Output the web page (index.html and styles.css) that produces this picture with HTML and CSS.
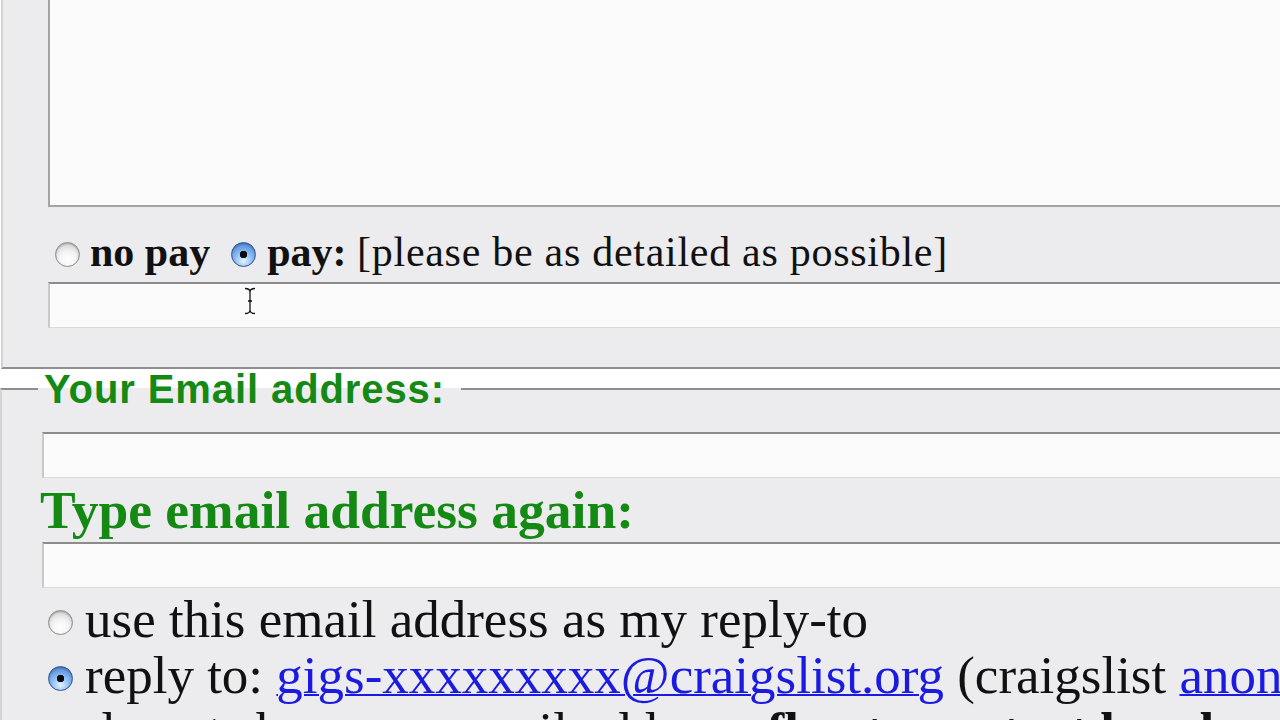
FILE: index.html
```html
<!DOCTYPE html>
<html lang="en">
<head>
  <meta charset="UTF-8" />
  <meta name="viewport" content="width=device-width, initial-scale=1.0"/>
  <title>craigslist | create posting</title>
  <link rel="stylesheet" href="styles.css">
</head>
<body>
  <div class="page">
    <form action="/post" method="POST">
      <fieldset class="box box-desc">
        <textarea class="desc" name="PostingBody"></textarea>

        <div class="pay-row">
          <input type="radio" name="pay" class="radio radio-first" value="no">
          <b class="pay-label">no pay</b>
          <input type="radio" name="pay" class="radio radio-second" value="yes" checked>
          <span class="pay-label"><b>pay:</b> <span class="hint">[please be as detailed as possible]</span></span>
        </div>

        <div class="field-wrap">
          <input type="text" class="field" name="remuneration">
          <svg class="ibeam" width="14" height="28" viewBox="0 0 14 28">
            <path d="M2 1.5 Q7 1.5 7 5 Q7 1.5 12 1.5 M7 5 V23 M2 26.5 Q7 26.5 7 23 Q7 26.5 12 26.5 M5 14 H9" fill="none" stroke="#fff" stroke-width="3"/>
            <path d="M2 1.5 Q7 1.5 7 5 Q7 1.5 12 1.5 M7 5 V23 M2 26.5 Q7 26.5 7 23 Q7 26.5 12 26.5 M5 14 H9" fill="none" stroke="#111" stroke-width="1.3"/>
          </svg>
        </div>
      </fieldset>

      <fieldset class="box box-email">
        <legend>Your Email address:</legend>
        <input type="text" class="field" name="FromEMail">

        <div class="again">Type email address again:</div>
        <input type="text" class="field" name="ConfirmEMail">

        <label class="option">
          <input type="radio" name="Privacy" class="radio radio-small" value="C">
          <span>use this email address as my reply-to</span>
        </label>
        <label class="option">
          <input type="radio" name="Privacy" class="radio radio-small" value="A" checked>
          <span>reply to: <a href="#">gigs-xxxxxxxxx@craigslist.org</a> (craigslist <a href="#">anonymizes</a> your email address)</span>
        </label>
        <div class="option-more">do not show any email address, <b>flag to contact by phone only</b></div>
      </fieldset>
    </form>
  </div>
</body>
</html>
```

FILE: styles.css
```css
html, body {
  overflow: hidden;
}
body {
  margin: 0;
  background: #fff;
  font-family: "Liberation Serif", "Times New Roman", serif;
  color: #111;
}
.page {
  margin-top: -60px;
}
.box {
  width: 1400px;
  box-sizing: border-box;
  margin: 0 0 0 1px;
  min-inline-size: 0;
  background: #ececee;
  border: 2px solid #8f8f8f;
  border-left-color: #d4d4d4;
}
.box-desc {
  padding: 18px 0 39px 45px;
}
.box-email {
  margin-left: 0;
  padding: 23px 0 0 40px;
}
.desc {
  display: block;
  width: 1340px;
  height: 247px;
  box-sizing: border-box;
  margin: 0;
  background: #fbfbfc;
  border: 2px solid #a4a4a4;
  border-top-color: #8a8a8a;
  resize: none;
}
.pay-row {
  display: flex;
  align-items: center;
  height: 50px;
  margin-top: 20px;
  font-size: 42px;
  line-height: 50px;
  white-space: nowrap;
}
.hint {
  letter-spacing: 0.72px;
}
.radio {
  -webkit-appearance: none;
  appearance: none;
  flex: none;
  width: 25px;
  height: 25px;
  margin: 0;
  border-radius: 50%;
  border: 1px solid #8c8c8c;
  box-sizing: border-box;
  background: radial-gradient(circle at 50% 72%, #ffffff 0%, #f4f4f4 40%, #c6c6c6 100%);
  box-shadow: inset 0 1px 2px rgba(0,0,0,0.25);
}
.radio:checked {
  border-color: #34588f;
  background:
    radial-gradient(circle at 50% 50%, #0b0b14 0 3.5px, transparent 4px),
    radial-gradient(circle at 50% 78%, #e2f4ff 0%, #8cbcf2 42%, #3b76cc 100%);
}
.radio-first {
  margin: 4px 10px 0 7px;
}
.radio-second {
  margin: 4px 11px 0 21px;
}
.field-wrap {
  position: relative;
  margin-top: 5px;
}
.field {
  display: block;
  width: 1340px;
  height: 46px;
  box-sizing: border-box;
  margin: 0;
  background: #fbfbfc;
  border: 2px solid #c9c9c9;
  border-top-color: #8c8c8c;
  border-bottom: 1px solid #dadada;
}
.ibeam {
  position: absolute;
  left: 195px;
  top: 5px;
}
legend {
  margin-left: -4px;
  padding: 0 16px 0 6px;
  font-family: "Liberation Sans", Arial, sans-serif;
  font-weight: bold;
  font-size: 40px;
  line-height: 40px;
  letter-spacing: 0.9px;
  color: #148a14;
}
.again {
  margin: 4px 0 4px -2px;
  font-weight: bold;
  font-size: 53.5px;
  line-height: 56px;
  color: #148a14;
  white-space: nowrap;
}
.option {
  display: flex;
  align-items: center;
  font-size: 53px;
  line-height: 56px;
  white-space: nowrap;
}
.box-email .field:last-of-type {
  margin-bottom: 3px;
}
.radio-small {
  width: 25px;
  height: 25px;
  margin: 6px 12px 0 6px;
}
.option a {
  color: #1a1ae0;
  text-decoration: underline;
  text-decoration-thickness: 2px;
}
.option-more {
  padding-left: 46px;
  font-size: 53px;
  line-height: 56px;
  white-space: nowrap;
}
```
